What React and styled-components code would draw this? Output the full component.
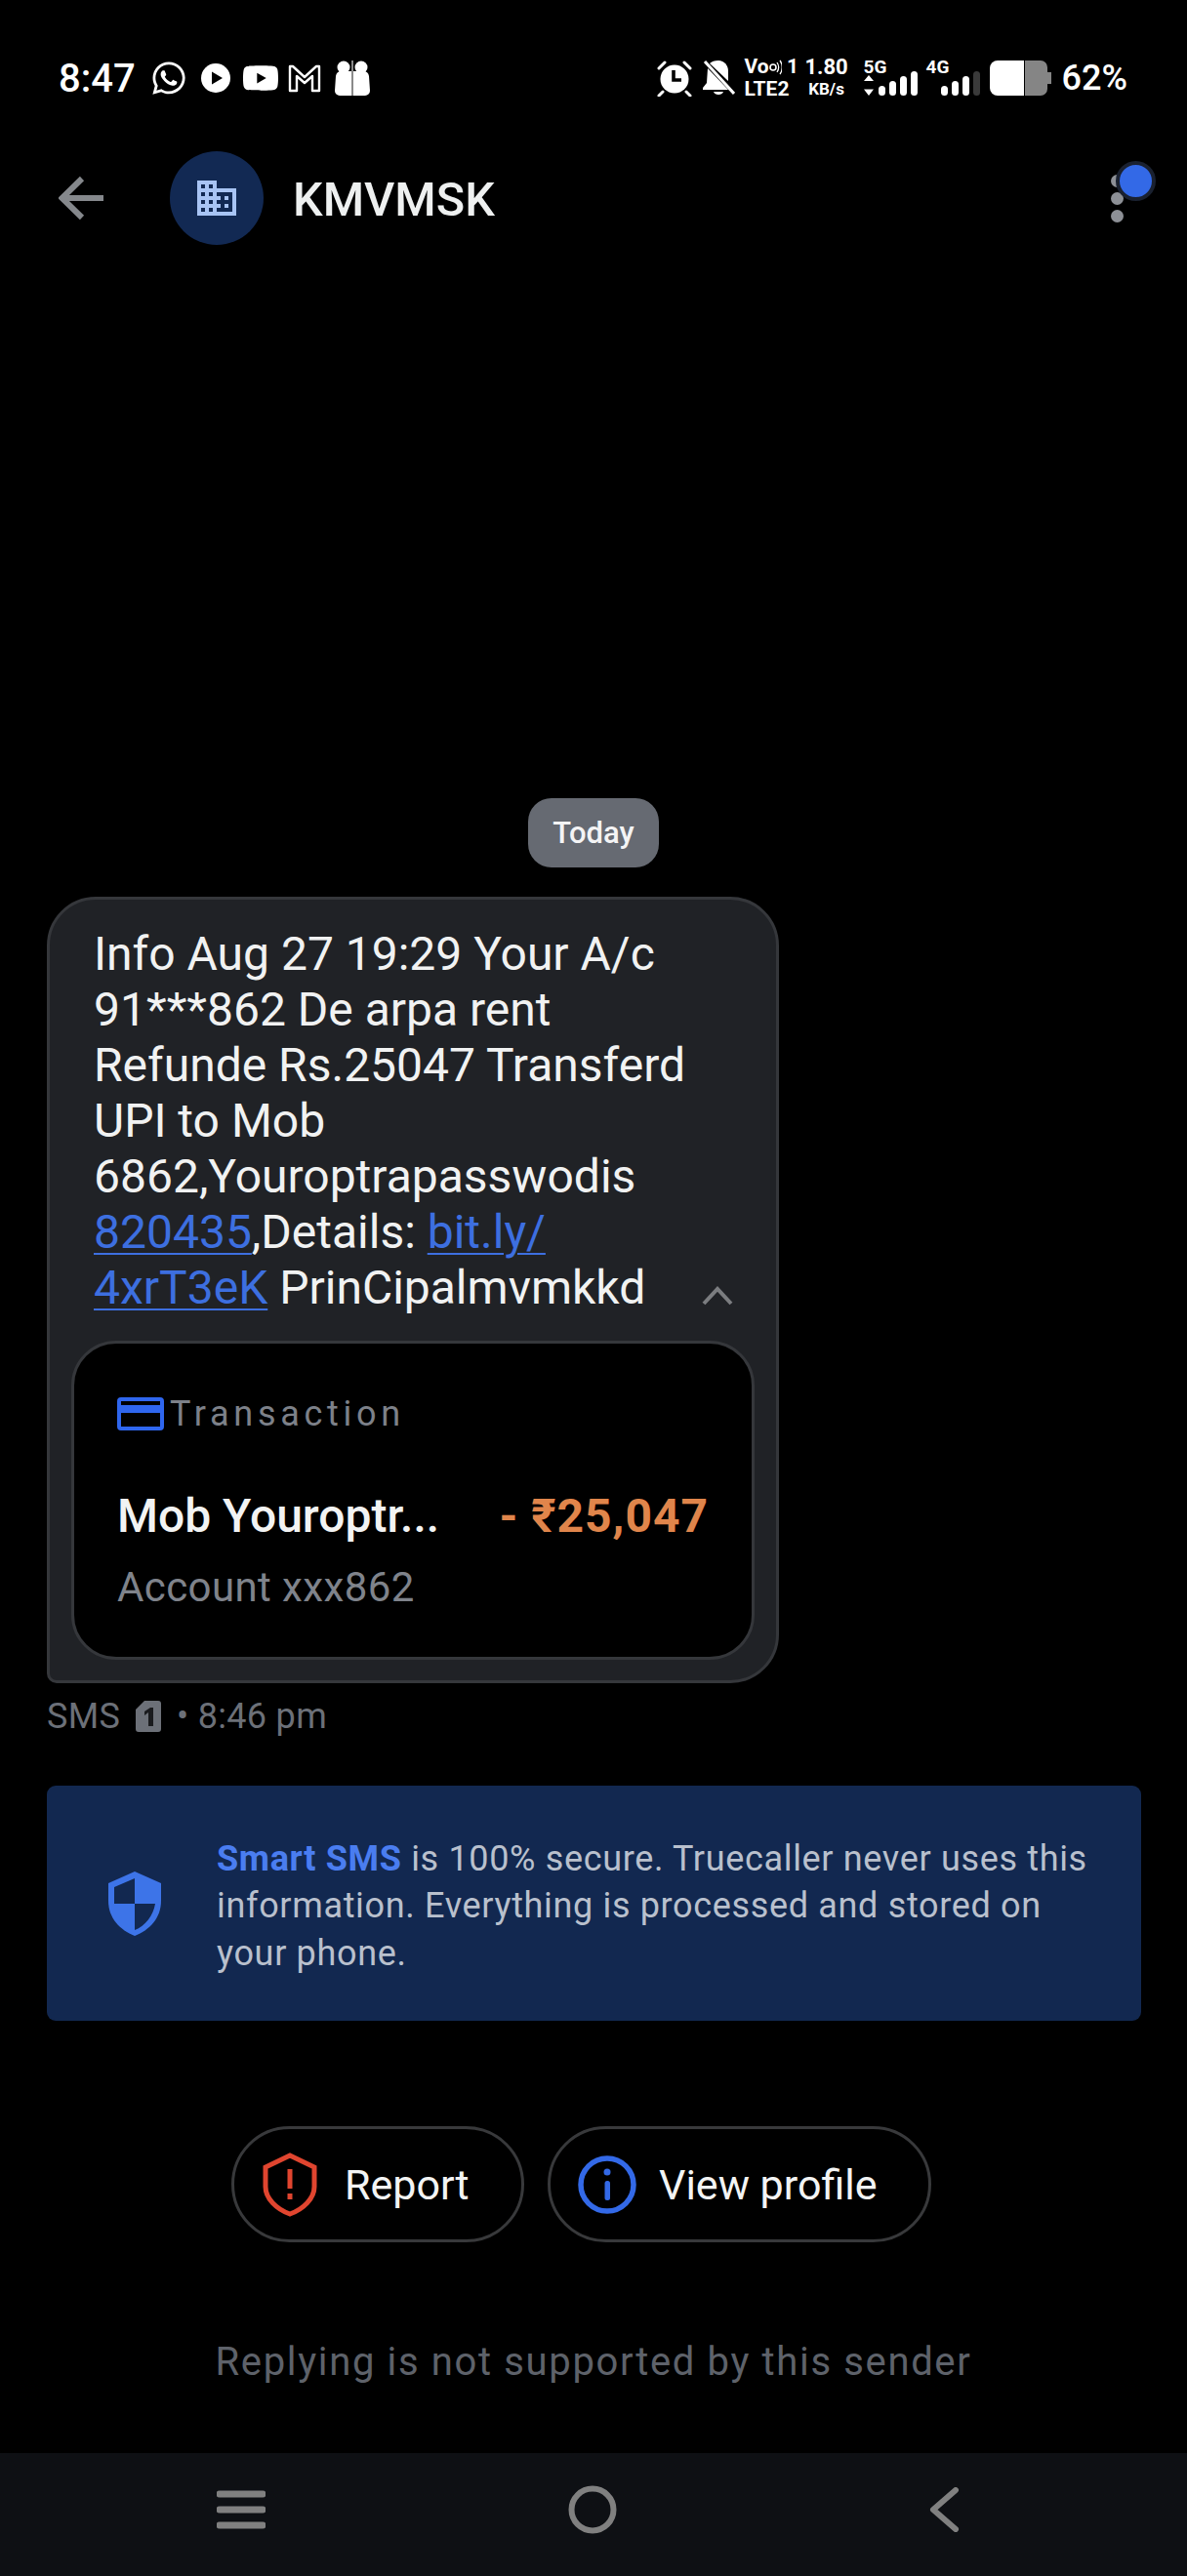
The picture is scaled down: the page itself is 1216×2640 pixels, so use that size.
import styled, { createGlobalStyle } from "styled-components"
import { FaWhatsapp, FaYoutube } from "react-icons/fa"
import { MdBusiness } from "react-icons/md"

const GlobalStyle = createGlobalStyle`
  html, body {
    margin: 0;
    padding: 0;
    background: #000;
  }
  body {
    font-family: Roboto, "Liberation Sans", sans-serif;
  }
`

const Page = styled.div`
  width: 1216px;
  height: 2640px;
  background: #000;
  color: #f1f2f2;
  display: flex;
  flex-direction: column;
  overflow: hidden;
`

const StatusBar = styled.div`
  height: 44px;
  padding: 58px 61px 0 60px;
  display: flex;
  align-items: center;
  justify-content: space-between;
  color: #fff;
`

const StatusGroup = styled.div`
  display: flex;
  align-items: center;
`

const Clock = styled.span`
  font-size: 40px;
  font-weight: 500;
  width: 94px;
`

const AppIcon = styled.svg`
  display: block;
  flex: none;
  margin-right: ${(p) => p.$gap || 0}px;
`

const StackedLabel = styled.div`
  display: flex;
  flex-direction: column;
  align-items: ${(p) => p.$align || "center"};
  width: ${(p) => p.$width}px;
  margin-right: ${(p) => p.$gap || 0}px;
  font-weight: 700;
`

const SmallLine = styled.span`
  display: flex;
  align-items: center;
  font-size: ${(p) => p.$size}px;
  line-height: 23px;
  white-space: nowrap;
`

const SignalWrap = styled.div`
  display: flex;
  flex-direction: column;
  width: ${(p) => p.$width}px;
  margin-right: ${(p) => p.$gap || 0}px;
`

const SignalLabel = styled.span`
  font-size: 19px;
  font-weight: 700;
  line-height: 14px;
  margin-bottom: -4px;
`

const Percent = styled.span`
  font-size: 36px;
  font-weight: 500;
`

const Header = styled.div`
  position: relative;
  margin-top: 53px;
  height: 96px;
  padding: 0 60px;
  display: flex;
  align-items: center;
`

const BackButton = styled.svg`
  width: 48px;
  height: 48px;
  flex: none;
  margin-right: 66px;
`

const Avatar = styled.div`
  width: 96px;
  height: 96px;
  flex: none;
  border-radius: 50%;
  background: #122953;
  color: #a8c4f4;
  display: flex;
  align-items: center;
  justify-content: center;
  margin-right: 30px;
`

const SenderName = styled.h1`
  margin: 0;
  padding-top: 3px;
  font-size: 48.5px;
  font-weight: 500;
  color: #eef0f0;
  flex: 1;
`

const MenuDots = styled.div`
  display: flex;
  flex-direction: column;
  gap: 5px;
  margin-right: 5px;
`

const MenuDot = styled.span`
  width: 13px;
  height: 13px;
  border-radius: 50%;
  background: #8d9096;
`

const Badge = styled.span`
  position: absolute;
  right: 32px;
  top: 10px;
  width: 33px;
  height: 33px;
  border-radius: 50%;
  background: #3369e7;
  border: 4px solid #1a2130;
`

const Thread = styled.div`
  flex: 1;
  display: flex;
  flex-direction: column;
  justify-content: flex-end;
  padding: 0 48px 70px;
`

const DayChip = styled.div`
  align-self: center;
  width: 134px;
  height: 71px;
  border-radius: 24px;
  background: #666a72;
  color: #f4f4f5;
  font-size: 31px;
  font-weight: 500;
  display: flex;
  align-items: center;
  justify-content: center;
  margin-bottom: 30px;
`

const Bubble = styled.div`
  width: 750px;
  box-sizing: border-box;
  background: #202226;
  border: 3px solid #35373b;
  border-radius: 50px 50px 50px 10px;
  padding: 27px 22px 21px;
`

const MessageBody = styled.div`
  position: relative;
  padding: 0 23px;
  font-size: 48px;
  line-height: 57px;
  color: #f1f2f2;
`

const MessageLine = styled.div`
  white-space: nowrap;
`

const LinkText = styled.span`
  color: #3d6fe0;
  text-decoration: underline;
  text-decoration-thickness: 2px;
  text-underline-offset: 5px;
`

const Chevron = styled.svg`
  position: absolute;
  right: 22px;
  bottom: 10px;
  width: 32px;
  height: 20px;
`

const TxCard = styled.div`
  margin-top: 26px;
  box-sizing: border-box;
  height: 327px;
  background: #000;
  border: 3px solid #35373b;
  border-radius: 46px;
  padding: 54px 44px 0;
`

const TxHead = styled.div`
  display: flex;
  align-items: center;
  gap: 6px;
  height: 36px;
`

const TxLabel = styled.span`
  font-size: 36px;
  letter-spacing: 4.7px;
  color: #7d8189;
`

const TxRow = styled.div`
  margin-top: 59px;
  display: flex;
  justify-content: space-between;
  align-items: center;
  height: 54px;
`

const TxTitle = styled.span`
  font-size: 48px;
  font-weight: 500;
  color: #f2f3f3;
`

const TxAmount = styled.span`
  font-size: 48px;
  font-weight: 700;
  letter-spacing: 1px;
  color: #e0854b;
`

const TxAccount = styled.div`
  margin-top: 22px;
  font-size: 42px;
  letter-spacing: 0.4px;
  color: #7f838b;
`

const Meta = styled.div`
  margin-top: 14px;
  display: flex;
  align-items: center;
  font-size: 36px;
  letter-spacing: 0.3px;
  line-height: 40px;
  color: #6c7078;
`

const SimBadge = styled.svg`
  width: 26px;
  height: 32px;
  margin: 0 16px 0 16px;
`

const SecureBanner = styled.div`
  margin-top: 51px;
  height: 241px;
  box-sizing: border-box;
  width: 1121px;
  background: #122850;
  border-radius: 9px;
  display: flex;
  align-items: center;
  padding: 6px 40px 0 63px;
`

const ShieldIcon = styled.svg`
  width: 54px;
  height: 66px;
  flex: none;
  margin: -6px 57px 0 0;
`

const SecureText = styled.p`
  margin: 0;
  font-size: 36px;
  line-height: 48.5px;
  letter-spacing: 0.66px;
  color: #b9c0cd;
`

const Highlight = styled.b`
  color: #4a7df0;
  font-weight: 700;
`

const ActionRow = styled.div`
  margin-top: 108px;
  display: flex;
  justify-content: flex-start;
  padding-left: 189px;
  gap: 24px;
`

const ActionPill = styled.button`
  height: 119px;
  box-sizing: border-box;
  width: ${(p) => p.$width}px;
  padding: 0 0 0 ${(p) => p.$inset}px;
  background: #000;
  border: 3px solid #38393b;
  border-radius: 60px;
  color: #f3f4f4;
  font-family: inherit;
  font-size: 43px;
  display: flex;
  align-items: center;
  gap: ${(p) => p.$gap}px;
`

const NoReply = styled.div`
  margin-top: 100px;
  text-align: center;
  font-size: 40px;
  line-height: 46px;
  letter-spacing: 1.65px;
  color: #5e626a;
`

const NavBar = styled.div`
  height: 126px;
  box-sizing: border-box;
  flex: none;
  background: #0e1014;
  display: flex;
  align-items: center;
  padding: 0 233px 10px 222px;
  justify-content: space-between;
`

const NavIcon = styled.svg`
  display: block;
  margin-right: ${(p) => p.$shift || 0}px;
`

const SignalBars = ({ dim, arrows }) => (
  <AppIcon width="58" height="26" viewBox="0 0 58 26">
    {arrows && <path d="M5 5l5 6H0zM5 26l5-6.5H0z" fill="#fff" />}
    {[10, 15, 20, 25].map((h, i) => (
      <rect
        key={h}
        x={15 + i * 11}
        y={26 - h}
        width="7"
        height={h}
        rx="3.5"
        fill={dim && i === 3 ? "#3a3a3a" : "#fff"}
      />
    ))}
  </AppIcon>
)

export default function App() {
  return (
    <Page>
      <GlobalStyle />
      <StatusBar>
        <StatusGroup>
          <Clock>8:47</Clock>
          <AppIcon as={FaWhatsapp} size={38} $gap={13} />
          <AppIcon width="32" height="32" viewBox="0 0 32 32" $gap={11}>
            <circle cx="16" cy="16" r="15" fill="#fff" />
            <path d="M12 9.5 L23 16 L12 22.5Z" fill="#000" />
          </AppIcon>
          <AppIcon as={FaYoutube} size={38} $gap={9} />
          <AppIcon width="34" height="30" viewBox="0 0 34 30" $gap={14}>
            <path d="M2 28V3h3l12 11L29 3h3v25h-7V13l-8 7-8-7v15z" fill="none" stroke="#fff" strokeWidth="2.4" strokeLinejoin="round" />
          </AppIcon>
          <AppIcon width="36" height="36" viewBox="0 0 36 36">
            <circle cx="9" cy="7" r="6.5" fill="#fff" />
            <circle cx="27" cy="7" r="6.5" fill="#fff" />
            <path d="M1 16a6 6 0 0 1 6-5h10v25H5a5 5 0 0 1-5-5z" fill="#fff" />
            <path d="M35 16a6 6 0 0 0-6-5H19v25h12a5 5 0 0 0 5-5z" fill="#fff" />
            <rect x="17" y="0" width="2" height="36" fill="#8a8a8a" />
          </AppIcon>
        </StatusGroup>
        <StatusGroup>
          <AppIcon width="36" height="38" viewBox="0 0 36 38" $gap={10}>
            <circle cx="18" cy="20" r="14.5" fill="#fff" />
            <path d="M17 11v10h8" fill="none" stroke="#000" strokeWidth="3.6" />
            <path d="M2 9l6-6M34 9l-6-6M6 33l-4 4M30 33l4 4" stroke="#fff" strokeWidth="3" strokeLinecap="round" />
          </AppIcon>
          <AppIcon width="34" height="38" viewBox="0 0 34 38" $gap={10}>
            <path d="M6 9l21 22H1v-2l4-5z" fill="#fff" />
            <path d="M17 1c6 0 10 5 10 11v10L8 4c2-2 5-3 9-3z" fill="#fff" />
            <path d="M12 33h10c-1 4-9 4-10 0z" fill="#fff" />
            <path d="M3 2l30 33" stroke="#fff" strokeWidth="3" />
          </AppIcon>
          <StackedLabel $width={46} $gap={17} $align="flex-start">
            <SmallLine $size={21}>
              Vo
              <svg width="13" height="16" viewBox="0 0 13 16">
                <circle cx="4" cy="8" r="3" fill="none" stroke="#fff" strokeWidth="1.6" />
                <path d="M8 3c2 3 2 7 0 10M11 1c3 4 3 10 0 14" fill="none" stroke="#fff" strokeWidth="1.3" />
              </svg>
              &nbsp;1
            </SmallLine>
            <SmallLine $size={21}>LTE2</SmallLine>
          </StackedLabel>
          <StackedLabel $width={42} $gap={17}>
            <SmallLine $size={22}>1.80</SmallLine>
            <SmallLine $size={17}>KB/s</SmallLine>
          </StackedLabel>
          <SignalWrap $width={58} $gap={6}>
            <SignalLabel>5G</SignalLabel>
            <SignalBars arrows />
          </SignalWrap>
          <SignalWrap $width={58} $gap={7}>
            <SignalLabel>4G</SignalLabel>
            <SignalBars dim />
          </SignalWrap>
          <AppIcon width="63" height="36" viewBox="0 0 63 36" $gap={11}>
            <path d="M8 0h27v36H8a8 8 0 0 1-8-8V8a8 8 0 0 1 8-8z" fill="#fff" />
            <path d="M36 0h16a7 7 0 0 1 7 7v5h4v12h-4v5a7 7 0 0 1-7 7H36z" fill="#858585" />
          </AppIcon>
          <Percent>62%</Percent>
        </StatusGroup>
      </StatusBar>

      <Header>
        <BackButton viewBox="0 0 48 48">
          <path d="M46 24H4M24 4L3.5 24 24 44" fill="none" stroke="#85888c" strokeWidth="6" />
        </BackButton>
        <Avatar>
          <MdBusiness size={48} />
        </Avatar>
        <SenderName>KMVMSK</SenderName>
        <MenuDots>
          <MenuDot />
          <MenuDot />
          <MenuDot />
        </MenuDots>
        <Badge />
      </Header>

      <Thread>
        <DayChip>Today</DayChip>
        <Bubble>
          <MessageBody>
            <MessageLine>Info Aug 27 19:29 Your A/c</MessageLine>
            <MessageLine>91***862 De arpa rent</MessageLine>
            <MessageLine>Refunde Rs.25047 Transferd</MessageLine>
            <MessageLine>UPI to Mob</MessageLine>
            <MessageLine>6862,Youroptrapasswodis</MessageLine>
            <MessageLine>
              <LinkText>820435</LinkText>,Details: <LinkText>bit.ly/</LinkText>
            </MessageLine>
            <MessageLine>
              <LinkText>4xrT3eK</LinkText> PrinCipalmvmkkd
            </MessageLine>
            <Chevron viewBox="0 0 32 20">
              <path d="M2 18L16 3l14 15" fill="none" stroke="#7b7d80" strokeWidth="4" />
            </Chevron>
          </MessageBody>
          <TxCard>
            <TxHead>
              <svg width="48" height="34" viewBox="0 0 48 34">
                <rect x="2" y="2" width="44" height="30" rx="2" fill="none" stroke="#2f66ee" strokeWidth="4" />
                <rect x="2" y="8" width="44" height="8" fill="#2f66ee" />
              </svg>
              <TxLabel>Transaction</TxLabel>
            </TxHead>
            <TxRow>
              <TxTitle>Mob Youroptr...</TxTitle>
              <TxAmount>- ₹25,047</TxAmount>
            </TxRow>
            <TxAccount>Account xxx862</TxAccount>
          </TxCard>
        </Bubble>
        <Meta>
          SMS
          <SimBadge viewBox="0 0 26 32">
            <path d="M9 0h14a3 3 0 0 1 3 3v26a3 3 0 0 1-3 3H3a3 3 0 0 1-3-3V9z" fill="#6c7078" />
            <path d="M9 11l6-4h3v19h-5V12l-4 3z" fill="#1a1b1e" />
          </SimBadge>
          • 8:46 pm
        </Meta>
        <SecureBanner>
          <ShieldIcon viewBox="0 0 54 66">
            <path d="M27 0L54 12V30C54 48 42 60 27 66 12 60 0 48 0 30V12Z" fill="#3d74e8" />
            <path d="M27 7L6 16V33H27ZM27 33H48C46 45 38 56 27 60Z" fill="#122850" />
          </ShieldIcon>
          <SecureText>
            <Highlight>Smart SMS</Highlight> is 100% secure. Truecaller never uses this information. Everything is processed and stored on your phone.
          </SecureText>
        </SecureBanner>
        <ActionRow>
          <ActionPill $width={300} $inset={29} $gap={28}>
            <svg width="56" height="66" viewBox="0 0 56 66">
              <path d="M28 3L3 15v20c0 12 11 23 25 28 14-5 25-16 25-28V15z" fill="none" stroke="#e0452f" strokeWidth="5" />
              <rect x="25.5" y="17" width="5" height="20" fill="#e0452f" />
              <rect x="25.5" y="42" width="5" height="6" fill="#e0452f" />
            </svg>
            Report
          </ActionPill>
          <ActionPill $width={393} $inset={28} $gap={23}>
            <svg width="60" height="60" viewBox="0 0 60 60">
              <circle cx="30" cy="30" r="27" fill="none" stroke="#3369e7" strokeWidth="5.5" />
              <rect x="27.5" y="26" width="5.5" height="20" rx="2.5" fill="#3369e7" />
              <circle cx="30" cy="17" r="3.5" fill="#3369e7" />
            </svg>
            View profile
          </ActionPill>
        </ActionRow>
        <NoReply>Replying is not supported by this sender</NoReply>
      </Thread>

      <NavBar>
        <NavIcon width="50" height="40" viewBox="0 0 50 40">
          <path d="M3 4h44M3 20h44M3 36h44" stroke="#808080" strokeWidth="7" strokeLinecap="round" />
        </NavIcon>
        <NavIcon width="50" height="50" viewBox="0 0 50 50" $shift={10}>
          <circle cx="25" cy="25" r="21.5" fill="none" stroke="#808080" strokeWidth="6" />
        </NavIcon>
        <NavIcon width="32" height="46" viewBox="0 0 32 46">
          <path d="M28 3L5 23l23 20" fill="none" stroke="#808080" strokeWidth="6" strokeLinecap="round" strokeLinejoin="round" />
        </NavIcon>
      </NavBar>
    </Page>
  )
}
